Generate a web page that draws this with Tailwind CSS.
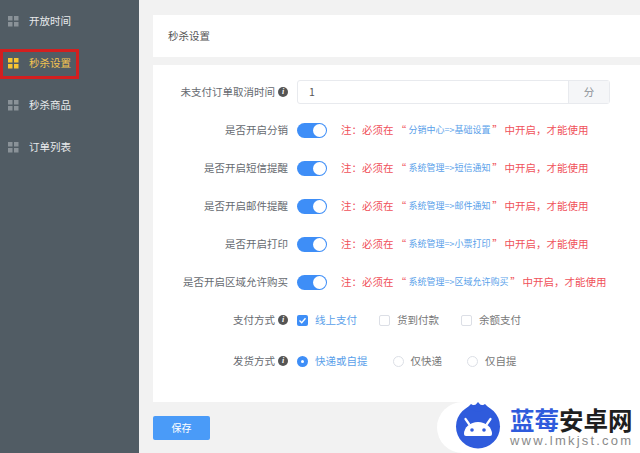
<!DOCTYPE html>
<html lang="zh">
<head>
<meta charset="UTF-8">
<title>秒杀设置</title>
<script src="https://cdn.jsdelivr.net/npm/@tailwindcss/browser@4"></script>
</head>
<body class="w-[640px] h-[453px] overflow-hidden bg-[#f2f2f2] font-['Noto_Sans_CJK_SC','Liberation_Sans',sans-serif] text-[10.5px] leading-[14px]">
<div class="relative flex h-[453px]">

  <!-- sidebar -->
  <aside class="w-[139px] h-full bg-[#515c64] text-[#e8eaec] shrink-0">
    <div class="flex items-center h-[42px] pl-[8px] gap-[10px]">
      <svg class="w-[11px] h-[11px]" viewBox="0 0 11 11" fill="#8a9298"><rect width="4.5" height="4.5"/><rect x="6" width="4.5" height="4.5"/><rect y="6" width="4.5" height="4.5"/><rect x="6" y="6" width="4.5" height="4.5"/></svg>
      <span>开放时间</span>
    </div>
    <div class="flex items-center h-[42px] pl-[8px] gap-[10px] text-[#f5c451] relative">
      <svg class="w-[11px] h-[11px]" viewBox="0 0 11 11" fill="#f9c531"><rect width="4.5" height="4.5"/><rect x="6" width="4.5" height="4.5"/><rect y="6" width="4.5" height="4.5"/><rect x="6" y="6" width="4.5" height="4.5"/></svg>
      <span>秒杀设置</span>
      <div class="absolute left-0 top-[7px] w-[79px] h-[30px] border-[3px] border-[#d31f1f]"></div>
    </div>
    <div class="flex items-center h-[42px] pl-[8px] gap-[10px]">
      <svg class="w-[11px] h-[11px]" viewBox="0 0 11 11" fill="#8a9298"><rect width="4.5" height="4.5"/><rect x="6" width="4.5" height="4.5"/><rect y="6" width="4.5" height="4.5"/><rect x="6" y="6" width="4.5" height="4.5"/></svg>
      <span>秒杀商品</span>
    </div>
    <div class="flex items-center h-[42px] pl-[8px] gap-[10px]">
      <svg class="w-[11px] h-[11px]" viewBox="0 0 11 11" fill="#8a9298"><rect width="4.5" height="4.5"/><rect x="6" width="4.5" height="4.5"/><rect y="6" width="4.5" height="4.5"/><rect x="6" y="6" width="4.5" height="4.5"/></svg>
      <span>订单列表</span>
    </div>
  </aside>

  <!-- main -->
  <main class="flex-1 pl-[14px] pt-[15px]">
    <div class="h-[42px] bg-white flex items-center pl-[15px] text-[#555]">秒杀设置</div>

    <div class="mt-[8px] h-[337px] bg-white pt-[8px] text-[#666a70]">
      <!-- unpaid cancel time -->
      <div class="flex items-center h-[38px]">
        <div class="w-[135px] flex justify-end items-center gap-[3px] shrink-0 whitespace-nowrap">未支付订单取消时间
          <span class="w-[10px] h-[10px] rounded-full bg-[#555] text-white text-[8px] leading-[10px] text-center font-['Liberation_Serif',serif] italic font-bold shrink-0">i</span>
        </div>
        <div class="flex ml-[9px] w-[313px] h-[24px] border border-[#e8eaee] rounded-[3px]">
          <div class="flex-1 flex items-center pl-[11px] text-[#555]">1</div>
          <div class="w-[41px] bg-[#f5f6f8] border-l border-[#e8eaee] flex items-center justify-center text-[#8b8f96]">分</div>
        </div>
      </div>

      <!-- toggles -->
      <div class="flex items-center h-[38px]">
        <div class="w-[135px] text-right shrink-0">是否开启分销</div>
        <div class="ml-[9px] w-[30px] h-[15px] rounded-full bg-[#3e8ef7] flex justify-end items-center pr-[1px] shrink-0"><span class="w-[13px] h-[13px] rounded-full bg-white"></span></div>
        <div class="ml-[14px] flex items-center text-[#f0515a] whitespace-nowrap">注：必须在<span class="w-[15px] text-center">“</span><span class="text-[#5a9fea] text-[9px]">分销中心=>基础设置</span><span class="w-[14px] text-center">”</span>中开启，才能使用</div>
      </div>
      <div class="flex items-center h-[38px]">
        <div class="w-[135px] text-right shrink-0">是否开启短信提醒</div>
        <div class="ml-[9px] w-[30px] h-[15px] rounded-full bg-[#3e8ef7] flex justify-end items-center pr-[1px] shrink-0"><span class="w-[13px] h-[13px] rounded-full bg-white"></span></div>
        <div class="ml-[14px] flex items-center text-[#f0515a] whitespace-nowrap">注：必须在<span class="w-[15px] text-center">“</span><span class="text-[#5a9fea] text-[9px]">系统管理=>短信通知</span><span class="w-[14px] text-center">”</span>中开启，才能使用</div>
      </div>
      <div class="flex items-center h-[38px]">
        <div class="w-[135px] text-right shrink-0">是否开启邮件提醒</div>
        <div class="ml-[9px] w-[30px] h-[15px] rounded-full bg-[#3e8ef7] flex justify-end items-center pr-[1px] shrink-0"><span class="w-[13px] h-[13px] rounded-full bg-white"></span></div>
        <div class="ml-[14px] flex items-center text-[#f0515a] whitespace-nowrap">注：必须在<span class="w-[15px] text-center">“</span><span class="text-[#5a9fea] text-[9px]">系统管理=>邮件通知</span><span class="w-[14px] text-center">”</span>中开启，才能使用</div>
      </div>
      <div class="flex items-center h-[38px]">
        <div class="w-[135px] text-right shrink-0">是否开启打印</div>
        <div class="ml-[9px] w-[30px] h-[15px] rounded-full bg-[#3e8ef7] flex justify-end items-center pr-[1px] shrink-0"><span class="w-[13px] h-[13px] rounded-full bg-white"></span></div>
        <div class="ml-[14px] flex items-center text-[#f0515a] whitespace-nowrap">注：必须在<span class="w-[15px] text-center">“</span><span class="text-[#5a9fea] text-[9px]">系统管理=>小票打印</span><span class="w-[14px] text-center">”</span>中开启，才能使用</div>
      </div>
      <div class="flex items-center h-[38px]">
        <div class="w-[135px] text-right shrink-0">是否开启区域允许购买</div>
        <div class="ml-[9px] w-[30px] h-[15px] rounded-full bg-[#3e8ef7] flex justify-end items-center pr-[1px] shrink-0"><span class="w-[13px] h-[13px] rounded-full bg-white"></span></div>
        <div class="ml-[14px] flex items-center text-[#f0515a] whitespace-nowrap">注：必须在<span class="w-[15px] text-center">“</span><span class="text-[#5a9fea] text-[9px]">系统管理=>区域允许购买</span><span class="w-[14px] text-center">”</span>中开启，才能使用</div>
      </div>

      <!-- pay type -->
      <div class="flex items-center h-[38px]">
        <div class="w-[135px] flex justify-end items-center gap-[3px] shrink-0">支付方式
          <span class="w-[10px] h-[10px] rounded-full bg-[#555] text-white text-[8px] leading-[10px] text-center font-['Liberation_Serif',serif] italic font-bold">i</span>
        </div>
        <div class="ml-[9px] flex items-center">
          <span class="w-[11px] h-[11px] rounded-[2px] bg-[#3e8ef7] flex items-center justify-center"><svg class="w-[9px] h-[9px]" viewBox="0 0 9 9" fill="none" stroke="#fff" stroke-width="1.4"><path d="M1.500 4.500 3.700 6.700 7.500 2.200"/></svg></span>
          <span class="ml-[7px] text-[#5a9fea]">线上支付</span>
          <span class="ml-[22px] w-[11px] h-[11px] rounded-[2px] border border-[#dcdfe6]"></span>
          <span class="ml-[7px] text-[#777]">货到付款</span>
          <span class="ml-[22px] w-[11px] h-[11px] rounded-[2px] border border-[#dcdfe6]"></span>
          <span class="ml-[7px] text-[#777]">余额支付</span>
        </div>
      </div>

      <!-- delivery -->
      <div class="flex items-center h-[38px] mt-[3px]">
        <div class="w-[135px] flex justify-end items-center gap-[3px] shrink-0">发货方式
          <span class="w-[10px] h-[10px] rounded-full bg-[#555] text-white text-[8px] leading-[10px] text-center font-['Liberation_Serif',serif] italic font-bold">i</span>
        </div>
        <div class="ml-[9px] flex items-center">
          <span class="w-[11px] h-[11px] rounded-full bg-[#3e8ef7] flex items-center justify-center"><span class="w-[3px] h-[3px] rounded-full bg-white"></span></span>
          <span class="ml-[7px] text-[#5a9fea]">快递或自提</span>
          <span class="ml-[25px] w-[11px] h-[11px] rounded-full border border-[#dcdfe6]"></span>
          <span class="ml-[7px] text-[#777]">仅快递</span>
          <span class="ml-[25px] w-[11px] h-[11px] rounded-full border border-[#dcdfe6]"></span>
          <span class="ml-[7px] text-[#777]">仅自提</span>
        </div>
      </div>
    </div>

    <button class="mt-[14px] w-[57px] h-[24px] rounded-[2px] bg-[#4a9bf8] text-white text-[10px]">保存</button>
  </main>

  <!-- watermark -->
  <div class="absolute right-0 top-[402px] w-[203px] h-[51px] bg-white rounded-l-[26px] flex items-center pl-[17px]">
    <svg class="w-[48px] h-[51px] shrink-0" viewBox="0 0 48 51" fill="#2f5bdc">
      <circle cx="24" cy="24.500" r="22"/>
      <path d="M13 6 17 2 20.500 4 24 0 27.500 4 31 2 35 6 24 10Z"/>
      <path fill="#fff" d="M10 32a14 12 0 0 1 28 0v0a2 2 0 0 1-2 2H12a2 2 0 0 1-2-2Z"/>
      <path stroke="#fff" stroke-width="2.200" stroke-linecap="round" d="M15 22 11.500 17M33 22 36.500 17"/>
      <circle cx="18" cy="28" r="1.800"/><circle cx="30" cy="28" r="1.800"/>
    </svg>
    <div class="ml-[8px]">
      <div class="text-[24.500px] leading-[26px] font-bold text-[#1f1f1f] whitespace-nowrap"><span class="text-[#2f5bdc]">蓝莓</span>安卓网</div>
      <div class="text-[13px] leading-[15px] tracking-[2.2px] text-[#8a8a8a] font-['Liberation_Sans',sans-serif] whitespace-nowrap">www.lmkjst.com</div>
    </div>
  </div>
</div>
</body>
</html>
